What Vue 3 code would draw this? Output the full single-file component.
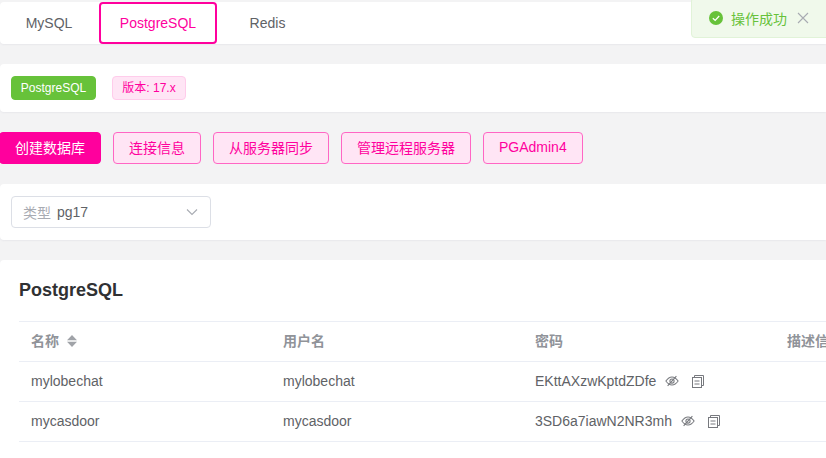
<script setup>
const tabs = [
  { name: 'MySQL', active: false },
  { name: 'PostgreSQL', active: true },
  { name: 'Redis', active: false },
]
const actions = ['连接信息', '从服务器同步', '管理远程服务器', 'PGAdmin4']
const rows = [
  { name: 'mylobechat', password: 'EKttAXzwKptdZDfe' },
  { name: 'mycasdoor', password: '3SD6a7iawN2NR3mh' },
]
</script>

<template>
  <div class="page">
    <div class="card tabs">
      <div v-for="t in tabs" :key="t.name" class="tab" :class="{ active: t.active }">{{ t.name }}</div>
    </div>

    <div class="card info">
      <span class="tag tag-green">PostgreSQL</span>
      <span class="tag tag-pink">版本: 17.x</span>
    </div>

    <div class="actions">
      <button class="btn btn-primary">创建数据库</button>
      <button v-for="a in actions" :key="a" class="btn btn-plain">{{ a }}</button>
    </div>

    <div class="card filter">
      <div class="select">
        <span class="prefix">类型</span>
        <span class="value">pg17</span>
        <svg class="chevron" viewBox="0 0 12 12" width="12" height="12">
          <path d="M1 3.5 L6 8.5 L11 3.5" fill="none" stroke="#a8abb2" stroke-width="1.1" />
        </svg>
      </div>
    </div>

    <div class="card panel">
      <h2 class="title">PostgreSQL</h2>
      <div class="table">
        <div class="row head">
          <div class="cell">
            名称
            <svg class="sort" viewBox="0 0 10 12" width="10" height="12">
              <path d="M5 0 L10 5.2 H0 Z M5 12 L0 6.8 H10 Z" fill="#a0a3a8" />
            </svg>
          </div>
          <div class="cell">用户名</div>
          <div class="cell">密码</div>
          <div class="cell">描述信息</div>
        </div>
        <div v-for="r in rows" :key="r.name" class="row">
          <div class="cell">{{ r.name }}</div>
          <div class="cell">{{ r.name }}</div>
          <div class="cell">
            <span>{{ r.password }}</span>
            <svg class="eye" viewBox="0 0 16 16" width="14" height="14">
              <g fill="none" stroke="#77797e" stroke-width="1.2">
                <path d="M1 8 C3.5 4.4 5.8 3.4 8 3.4 S12.5 4.4 15 8 C12.5 11.6 10.2 12.6 8 12.6 S3.5 11.6 1 8 Z" />
                <circle cx="8" cy="8" r="2.4" />
                <path d="M3 13.5 L13 2.5" />
              </g>
            </svg>
            <svg class="copy" viewBox="0 0 14 14" width="14" height="14">
              <g fill="none" stroke="#77797e" stroke-width="1">
                <rect x="1.5" y="3.5" width="9" height="10" />
                <path d="M3.5 3.5 V1.5 H12.5 V11.5 H10.5" />
                <path d="M3.5 7 H8.5 M3.5 10 H8.5" />
              </g>
            </svg>
          </div>
        </div>
      </div>
    </div>

    <div class="toast">
      <svg viewBox="0 0 14 14" width="14" height="14">
        <circle cx="7" cy="7" r="7" fill="#67c23a" />
        <path d="M3.8 7.2 L6.2 9.4 L10.2 5" fill="none" stroke="#fff" stroke-width="1.3" />
      </svg>
      <span class="toast-text">操作成功</span>
      <svg class="toast-close" viewBox="0 0 12 12" width="12" height="12">
        <path d="M1 1 L11 11 M11 1 L1 11" stroke="#a8abb2" stroke-width="1.1" />
      </svg>
    </div>
  </div>
</template>

<style scoped>
.page {
  position: relative;
  width: 826px;
  height: 458px;
  overflow: hidden;
  box-sizing: border-box;
  padding-top: 2px;
  background: #f3f3f4;
  font-family: "Liberation Sans", "Noto Sans CJK SC", sans-serif;
  font-size: 14px;
  color: #606266;
}
.card {
  background: #fff;
  box-shadow: 0 1px 2px rgba(60, 60, 100, 0.06);
  border-radius: 4px 0 0 4px;
}
.tabs {
  display: flex;
  height: 42px;
  margin-bottom: 20px;
}
.tab {
  box-sizing: border-box;
  height: 42px;
  line-height: 38px;
  border: 2px solid transparent;
  border-radius: 4px;
  text-align: center;
}
.tab:first-child {
  width: 98px;
  margin-right: 1px;
}
.tab.active {
  width: 118px;
  color: #ff009d;
  border-color: #ff009d;
}
.tab:last-child {
  width: 101px;
}
.info {
  display: flex;
  align-items: center;
  gap: 16px;
  height: 48px;
  padding-left: 11px;
  box-sizing: border-box;
  margin-bottom: 20px;
}
.tag {
  box-sizing: border-box;
  height: 24px;
  line-height: 22px;
  font-size: 12px;
  border-radius: 4px;
  border: 1px solid;
  text-align: center;
}
.tag-green {
  width: 85px;
  background: #67c23a;
  border-color: #67c23a;
  color: #fff;
}
.tag-pink {
  width: 74px;
  background: #ffe5f5;
  border-color: #ffcceb;
  color: #ff009d;
}
.actions {
  display: flex;
  gap: 12px;
  height: 32px;
  margin: 0 0 20px -1px;
}
.btn {
  box-sizing: border-box;
  height: 32px;
  padding: 0 15px 2px;
  font: inherit;
  border-radius: 4px;
  border: 1px solid;
  white-space: nowrap;
}
.btn-primary {
  background: #ff009d;
  border-color: #ff009d;
  color: #fff;
}
.btn-plain {
  background: #ffe5f5;
  border-color: #ff66c4;
  color: #ff009d;
}
.filter {
  box-sizing: border-box;
  height: 56px;
  padding: 12px 11px;
  margin-bottom: 20px;
}
.select {
  box-sizing: border-box;
  display: flex;
  align-items: center;
  width: 200px;
  height: 32px;
  padding: 0 12px 0 11px;
  border: 1px solid #dcdfe6;
  border-radius: 4px;
}
.prefix {
  color: #a8abb2;
  margin-right: 6px;
}
.chevron {
  margin-left: auto;
}
.panel {
  padding-left: 19px;
  height: 220px;
  border-radius: 4px 0 0 0;
}
.title {
  box-sizing: border-box;
  margin: 0;
  padding-top: 20px;
  height: 61px;
  line-height: 20px;
  font-size: 18px;
  font-weight: 700;
  color: #303133;
}
.table {
  border-top: 1px solid #ebeef5;
}
.row {
  display: grid;
  grid-template-columns: repeat(4, 252px);
  height: 39px;
  border-bottom: 1px solid #ebeef5;
}
.head {
  color: #909399;
  font-weight: 700;
}
.cell {
  display: flex;
  align-items: center;
  padding: 0 12px 1px;
  line-height: 20px;
  white-space: nowrap;
}
.head .cell {
  padding-bottom: 1px;
}
.sort {
  margin-left: 8px;
}
.eye {
  margin-left: 9px;
}
.copy {
  margin-left: 12px;
}
.toast {
  position: absolute;
  top: -3px;
  left: 691px;
  box-sizing: border-box;
  display: flex;
  align-items: center;
  width: 150px;
  height: 41px;
  padding-left: 17px;
  background: #f0f9eb;
  border: 1px solid #e1f3d8;
  border-radius: 4px;
  color: #67c23a;
}
.toast-text {
  margin-left: 8px;
}
.toast-close {
  margin-left: 10px;
}
</style>
